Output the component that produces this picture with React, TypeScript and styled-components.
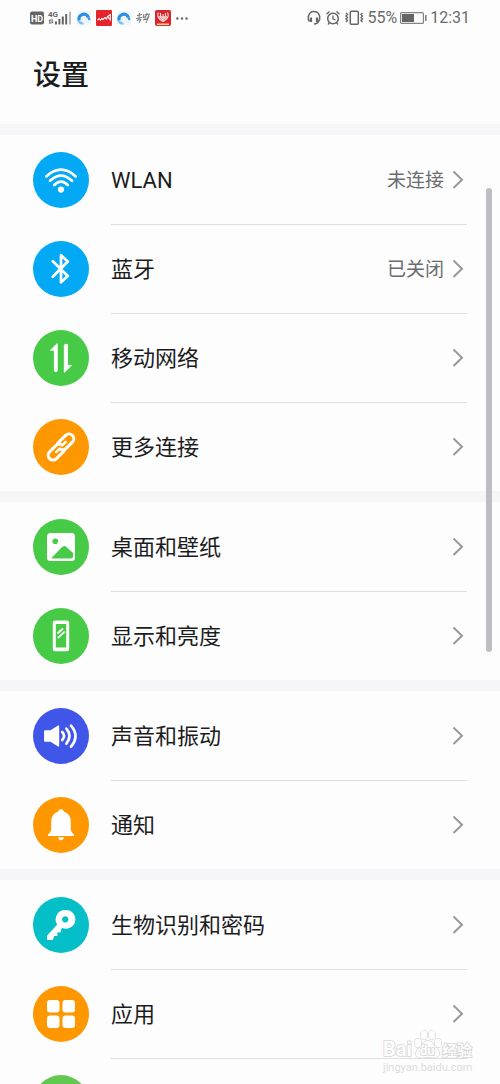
import React from "react";
import styled, { createGlobalStyle } from "styled-components";

const GlobalStyle = createGlobalStyle`
  * { box-sizing: border-box; }
  body {
    margin: 0;
    background: #fdfdfd;
    color: #1c1c1e;
    font-family: Roboto, "Noto Sans CJK SC", sans-serif;
  }
`;

const Screen = styled.div`
  position: relative;
  height: 100vh;
  overflow: hidden;
`;

const StatusBar = styled.div`
  display: flex;
  align-items: center;
  justify-content: space-between;
  height: 36px;
  padding: 0 30px;
  color: #6a6a6c;
`;

const StatusGroup = styled.div<{ $gap: number }>`
  display: flex;
  align-items: center;
  gap: ${(p) => p.$gap}px;
`;

const StatusText = styled.span`
  font-size: 16px;
  line-height: 20px;
`;

const Header = styled.header`
  height: 88px;
  padding: 20px 33px;
`;

const Title = styled.h1`
  margin: 0;
  font-size: 28px;
  line-height: 40px;
  font-weight: 500;
`;

const Section = styled.ul`
  margin: 0;
  padding: 0 33px;
  list-style: none;
  border-top: 11px solid #f6f5f8;
`;

const Item = styled.li`
  height: 89px;
`;

const RowButton = styled.button`
  display: flex;
  align-items: center;
  gap: 22px;
  width: 100%;
  height: 100%;
  padding: 0;
  border: 0;
  background: none;
  color: inherit;
  font: inherit;
  text-align: left;
`;

const Disc = styled.span<{ $color: string }>`
  flex: none;
  width: 56px;
  height: 56px;
  border-radius: 50%;
  background: ${(p) => p.$color};
  svg { display: block; }
`;

const RowBody = styled.span`
  display: flex;
  flex: 1;
  align-items: center;
  gap: 8px;
  height: 100%;
  padding-right: 3px;
  ${Item} + ${Item} & { border-top: 1px solid #dedee0; }
`;

const Label = styled.span`
  flex: 1;
  padding-top: 2px;
  font-size: 22px;
  line-height: 32px;
`;

const Value = styled.span`
  padding-top: 2px;
  font-size: 19px;
  line-height: 28px;
  color: #6c6c6e;
`;

const ScrollThumb = styled.div`
  position: absolute;
  top: 188px;
  right: 8px;
  width: 6px;
  height: 464px;
  border-radius: 3px;
  background: #bebdc1;
`;

const Watermark = styled.div`
  position: absolute;
  right: 26px;
  bottom: 10px;
  width: 92px;
  svg { display: block; }
`;

const Glyph = ({ children }: { children: React.ReactNode }) => (
  <svg width="56" height="56" viewBox="0 0 56 56" fill="none" stroke="#fff" strokeLinecap="round" strokeLinejoin="round" aria-hidden="true">
    {children}
  </svg>
);

const icons: Record<string, React.ReactNode> = {
  wifi: (
    <Glyph>
      <g strokeWidth="2.7">
        <path d="M13.3 24.4Q28 11 42.7 24.4" />
        <path d="M17 28.8Q28 18.4 39 28.8" />
        <path d="M21.2 33Q28 26.2 34.8 33" />
      </g>
      <circle cx="28" cy="37.6" r="3.1" fill="#fff" stroke="none" />
    </Glyph>
  ),
  bluetooth: (
    <Glyph>
      <path strokeWidth="2.7" d="M19.8 20.3L34.8 35L28 41.3V14.2L34.8 20.5L19.8 35.8" />
    </Glyph>
  ),
  data: (
    <Glyph>
      <g fill="#fff" strokeWidth="1">
        <path d="M24.2 14V41Q22.9 42.4 21.4 41V20.2H17.8Z" />
        <path d="M31.6 14.8Q33 13.4 34.5 14.8V35.4H38.4L31.6 42Z" />
      </g>
    </Glyph>
  ),
  link: (
    <Glyph>
      <g transform="rotate(-45 28 28)" strokeWidth="3">
        <path d="M28 33H16.5A4.8 4.8 0 0 1 16.5 23.4H25Q29 23.4 29.8 26.5" />
        <path d="M28 23H39.5A4.8 4.8 0 0 1 39.5 32.6H31Q27 32.6 26.2 29.5" />
        <path d="M21 28.2H26M30 27.8H35" strokeWidth="2.4" />
      </g>
    </Glyph>
  ),
  picture: (
    <Glyph>
      <rect x="14" y="14" width="28" height="28" rx="3.5" fill="#fff" stroke="none" />
      <circle cx="22.3" cy="22.3" r="2.8" fill="#47cb47" stroke="none" />
      <path d="M18.5 39L28.5 28.5Q31 25.7 33.5 28L40 34V37.5Q40 39.5 38 39.5H18.5Z" fill="#47cb47" stroke="none" />
    </Glyph>
  ),
  display: (
    <Glyph>
      <path fillRule="evenodd" fill="#fff" stroke="none" d="M22.5 12.5H33.5Q36.2 12.5 36.2 15.2V40.5Q36.2 43.2 33.5 43.2H22.5Q19.8 43.2 19.8 40.5V15.2Q19.8 12.5 22.5 12.5ZM22.8 16V39.5H33.2V16Z" />
      <path strokeWidth="1.8" d="M25 25L29.5 21M25.3 29.5L31.2 24.2" />
    </Glyph>
  ),
  sound: (
    <Glyph>
      <path fill="#fff" strokeWidth="1.4" d="M11.8 23H17.5L25.5 18V38L17.5 33H11.8Z" />
      <g strokeWidth="2.7">
        <path d="M29.2 24Q33 28 29.2 32" />
        <path d="M33.4 20.6Q39.6 28 33.4 35.6" />
        <path d="M38 17.6Q47 28 38 38.6" />
      </g>
    </Glyph>
  ),
  bell: (
    <Glyph>
      <path fill="#fff" stroke="none" d="M28 12.2Q30.3 12.2 30.8 14.4Q37.5 16.7 37.8 24.2V32.5Q38 35.5 41 37.8V39H15V37.8Q18 35.5 18.2 32.5V24.2Q18.5 16.7 25.2 14.4Q25.7 12.2 28 12.2ZM25.2 40.3H30.8Q30.5 43.3 28 43.3Q25.5 43.3 25.2 40.3Z" />
    </Glyph>
  ),
  key: (
    <Glyph>
      <path fillRule="evenodd" fill="#fff" stroke="none" d="M32.2 13A9.4 9.4 0 1 1 29.3 31L27.7 32.7L27.8 35.3L24.3 35.5L24.5 39L21.3 39L19.8 43H14.3Q13.6 41.5 14.2 38.5L24.2 27.6A9.4 9.4 0 0 1 32.2 13ZM32.2 19.2A3.2 3.2 0 1 0 32.3 19.2Z" />
    </Glyph>
  ),
  apps: (
    <Glyph>
      <g fill="#fff" stroke="none">
        <rect x="14" y="14" width="12.5" height="12.5" rx="3" />
        <rect x="29.5" y="14" width="12.5" height="12.5" rx="3" />
        <rect x="14" y="29.5" width="12.5" height="12.5" rx="3" />
        <rect x="29.5" y="29.5" width="12.5" height="12.5" rx="3" />
      </g>
    </Glyph>
  ),
};

type Row = { label?: string; icon?: string; color: string; value?: string };

const sections: Row[][] = [
  [
    { label: "WLAN", icon: "wifi", color: "#03a9f4", value: "未连接" },
    { label: "蓝牙", icon: "bluetooth", color: "#03a9f4", value: "已关闭" },
    { label: "移动网络", icon: "data", color: "#47cb47" },
    { label: "更多连接", icon: "link", color: "#ff9800" },
  ],
  [
    { label: "桌面和壁纸", icon: "picture", color: "#47cb47" },
    { label: "显示和亮度", icon: "display", color: "#47cb47" },
  ],
  [
    { label: "声音和振动", icon: "sound", color: "#3f56e8" },
    { label: "通知", icon: "bell", color: "#ff9800" },
  ],
  [
    { label: "生物识别和密码", icon: "key", color: "#04bfc7" },
    { label: "应用", icon: "apps", color: "#ff9800" },
    { color: "#62c850" },
  ],
];

const Chevron = () => (
  <svg width="12" height="20" viewBox="0 0 12 20" fill="none" stroke="#99999b" strokeWidth="2" aria-hidden="true">
    <path d="M1.5 1.5L10 9.7L1.5 18" />
  </svg>
);

const HdSignal = () => (
  <svg width="42" height="18" viewBox="0 0 42 18" aria-hidden="true">
    <rect x="0" y="2.5" width="14" height="13" rx="2" fill="#656567" />
    <text x="7" y="12.5" fontSize="9" fontWeight="700" fill="#fff" textAnchor="middle" fontFamily="Roboto">HD</text>
    <text x="18" y="8" fontSize="8" fontWeight="700" fill="#656567" fontFamily="Roboto">4G</text>
    <g fill="#656567">
      <path d="M18.5 12L20.5 9.8V15H19.3V12ZM21.5 9.8H22.6V12.8H24L21.6 15Z" />
      <rect x="25" y="12.5" width="2" height="3" />
      <rect x="28.4" y="10" width="2" height="5.5" />
      <rect x="31.8" y="7.5" width="2" height="8" />
      <rect x="35.2" y="5" width="2" height="10.5" />
      <rect x="39" y="2.5" width="2" height="13" fill="#b7b7b9" />
    </g>
  </svg>
);

const Swirl = () => (
  <svg width="14" height="14" viewBox="0 0 14 14" aria-hidden="true">
    <rect width="14" height="14" rx="3" fill="#eef5fb" />
    <path d="M2.2 9.5A4.8 4.8 0 0 1 11.4 6.5" fill="none" stroke="#2b8ee6" strokeWidth="3.2" />
    <path d="M1.5 9.5Q3 12.8 6.5 12.5" fill="none" stroke="#6cc3f5" strokeWidth="2" />
    <path d="M11.4 6.5L12.6 9" fill="none" stroke="#2b8ee6" strokeWidth="2" />
  </svg>
);

const RedWave = () => (
  <svg width="16" height="16" viewBox="0 0 16 16" aria-hidden="true">
    <rect width="16" height="16" rx="1" fill="#e4252b" />
    <path d="M1.5 10L3 8.8L4.5 10L6 8.5L7 9.5L9 7.5L10.5 9L11.5 6.5L14.3 4.5V10L12 7" fill="none" stroke="#fff" strokeWidth="1.1" />
  </svg>
);

const Script = () => (
  <svg width="14" height="14" viewBox="1 0 14 14" fill="none" stroke="#777779" aria-hidden="true">
    <path d="M2 4.5L7 3.5M4.5 2L4 6M1 7.5L7 6.5M5 6L2 10M3 9L6 8.5L4 12M9 3L8 7L11 5M12 2L9.5 9M10 4L14.5 3L12 8M14 5L11 12M8 9L13 8" />
  </svg>
);

const RedCrest = () => (
  <svg width="16" height="16" viewBox="0 0 16 16" aria-hidden="true">
    <rect width="16" height="16" rx="2" fill="#d8242b" />
    <path d="M3.5 2.5Q1.5 6.5 5 9.5L8 11.5L11 9.5Q14.5 6.5 12.5 2.5M5.5 3V6L8 8L10.5 6V3M4 6.5L8 10L12 6.5M8 4V11.5" fill="none" stroke="#fbe3dc" strokeWidth="1.1" />
    <path d="M2 14.3H14" stroke="#f3cf9b" strokeWidth="1.6" />
  </svg>
);

const Dots = () => (
  <svg width="12" height="3" viewBox="0 0 12 3" fill="#656567" aria-hidden="true">
    <circle cx="1.4" cy="1.5" r="1.2" />
    <circle cx="6" cy="1.5" r="1.2" />
    <circle cx="10.6" cy="1.5" r="1.2" />
  </svg>
);

const StatusGlyphs = () => (
  <svg width="57" height="16" viewBox="0 0 57 16" fill="none" stroke="#656567" strokeWidth="1.5" aria-hidden="true">
    <path d="M2.5 11.5Q.8 9.5 1.3 6.5Q2.5 1.5 7 1.5Q11.5 1.5 12.7 6.5Q13.2 9.5 11.5 11.5Q10.5 14 7 14" />
    <path d="M4 7.5V12M10 7.5V12" strokeWidth="2.2" />
    <circle cx="26" cy="8.5" r="5.3" />
    <path d="M26 5.5V8.8L28.5 10M19.5 4.2L22.5 1.5M32.5 4.2L29.5 1.5M22.5 12.8L21 14.5M29.5 12.8L31 14.5" strokeWidth="1.3" />
    <rect x="43.3" y="1.3" width="8" height="13" rx="1" />
    <path d="M39 3L40.5 4.5L39 6L40.5 7.5L39 9L40.5 10.5L39 12M55.5 3L54 4.5L55.5 6L54 7.5L55.5 9L54 10.5L55.5 12" strokeWidth="1.4" />
  </svg>
);

const Battery = () => (
  <svg width="27" height="12" viewBox="0 0 27 12" aria-hidden="true">
    <rect x=".6" y=".6" width="22.8" height="10.8" rx="1" fill="none" stroke="#858587" strokeWidth="1.2" />
    <rect x="2" y="2" width="12" height="8" fill="#656567" />
    <rect x="25" y="3" width="1.6" height="6" fill="#858587" />
  </svg>
);

const WatermarkArt = () => (
  <svg width="92" height="46" viewBox="0 0 92 46" fill="#fdfdfd" stroke="#d6d6d8" strokeWidth="1.6" paintOrder="stroke" aria-hidden="true">
    <text x="1" y="28" fontSize="20" fontWeight="700" fontFamily="Roboto">Bai</text>
    <g strokeWidth="1.4">
      <ellipse cx="36" cy="15" rx="3.3" ry="4.2" />
      <ellipse cx="42" cy="7" rx="3.3" ry="4.4" />
      <ellipse cx="50" cy="7" rx="3.3" ry="4.4" />
      <ellipse cx="56" cy="15" rx="3.3" ry="4.2" />
      <path d="M46 13Q50 13 52 18Q58 22 57 27Q55 31 46 29Q36 31 34 27Q33 22 40 18Q42 13 46 13Z" />
    </g>
    <text x="38" y="27" fontSize="13" fontWeight="700" fontFamily="Roboto">du</text>
    <text x="60" y="28" fontSize="15" fontWeight="700" fontFamily="Noto Sans CJK SC">经验</text>
    <text x="1" y="43" fontSize="11" fontFamily="Roboto" fill="#dcdcde" stroke="none">jingyan.baidu.com</text>
  </svg>
);

export default function App() {
  return (
    <Screen>
      <GlobalStyle />
      <StatusBar>
        <StatusGroup $gap={5}>
          <HdSignal />
          <Swirl />
          <RedWave />
          <Swirl />
          <Script />
          <RedCrest />
          <Dots />
        </StatusGroup>
        <StatusGroup $gap={3}>
          <StatusGlyphs />
          <StatusText>55%</StatusText>
          <Battery />
          <StatusText>12:31</StatusText>
        </StatusGroup>
      </StatusBar>
      <Header>
        <Title>设置</Title>
      </Header>
      <main>
        {sections.map((rows, s) => (
          <Section key={s}>
            {rows.map((row, r) => (
              <Item key={r}>
                <RowButton type="button">
                  <Disc $color={row.color}>{row.icon && icons[row.icon]}</Disc>
                  <RowBody>
                    <Label>{row.label}</Label>
                    {row.value && <Value>{row.value}</Value>}
                    <Chevron />
                  </RowBody>
                </RowButton>
              </Item>
            ))}
          </Section>
        ))}
      </main>
      <ScrollThumb />
      <Watermark>
        <WatermarkArt />
      </Watermark>
    </Screen>
  );
}
